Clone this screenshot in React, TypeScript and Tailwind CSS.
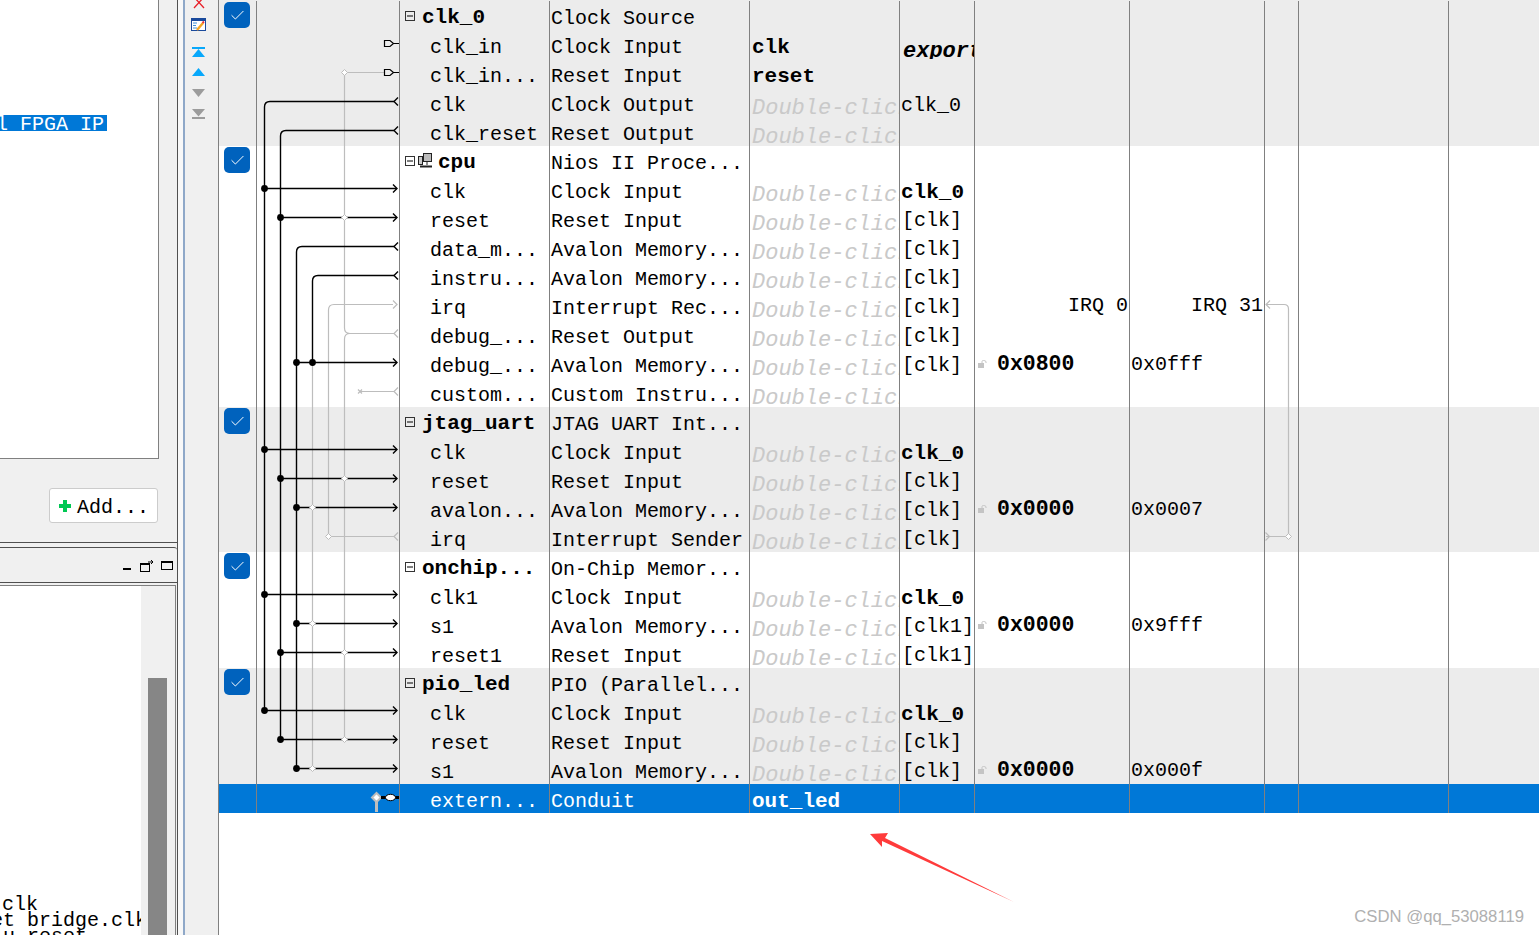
import React from "react";
import { Check } from "lucide-react";

interface Row {
  name: string;
  group?: boolean;
  icon?: boolean;
  type: string;
  conn?: string; // exported name, bold
  dbl?: boolean; // "Double-click" placeholder
  clock?: string;
  clockBold?: boolean;
  exportCol?: boolean;
  base?: string;
  end?: string;
  irq?: boolean;
  selected?: boolean;
}

const groups: { shaded: boolean; rows: Row[] }[] = [
  {
    shaded: true,
    rows: [
      { name: "clk_0", group: true, type: "Clock Source" },
      { name: "clk_in", type: "Clock Input", conn: "clk", exportCol: true },
      { name: "clk_in...", type: "Reset Input", conn: "reset" },
      { name: "clk", type: "Clock Output", dbl: true, clock: "clk_0" },
      { name: "clk_reset", type: "Reset Output", dbl: true },
    ],
  },
  {
    shaded: false,
    rows: [
      { name: "cpu", group: true, icon: true, type: "Nios II Proce..." },
      { name: "clk", type: "Clock Input", dbl: true, clock: "clk_0", clockBold: true },
      { name: "reset", type: "Reset Input", dbl: true, clock: "[clk]" },
      { name: "data_m...", type: "Avalon Memory...", dbl: true, clock: "[clk]" },
      { name: "instru...", type: "Avalon Memory...", dbl: true, clock: "[clk]" },
      { name: "irq", type: "Interrupt Rec...", dbl: true, clock: "[clk]", irq: true },
      { name: "debug_...", type: "Reset Output", dbl: true, clock: "[clk]" },
      { name: "debug_...", type: "Avalon Memory...", dbl: true, clock: "[clk]", base: "0x0800", end: "0x0fff" },
      { name: "custom...", type: "Custom Instru...", dbl: true },
    ],
  },
  {
    shaded: true,
    rows: [
      { name: "jtag_uart", group: true, type: "JTAG UART Int..." },
      { name: "clk", type: "Clock Input", dbl: true, clock: "clk_0", clockBold: true },
      { name: "reset", type: "Reset Input", dbl: true, clock: "[clk]" },
      { name: "avalon...", type: "Avalon Memory...", dbl: true, clock: "[clk]", base: "0x0000", end: "0x0007" },
      { name: "irq", type: "Interrupt Sender", dbl: true, clock: "[clk]" },
    ],
  },
  {
    shaded: false,
    rows: [
      { name: "onchip...", group: true, type: "On-Chip Memor..." },
      { name: "clk1", type: "Clock Input", dbl: true, clock: "clk_0", clockBold: true },
      { name: "s1", type: "Avalon Memory...", dbl: true, clock: "[clk1]", base: "0x0000", end: "0x9fff" },
      { name: "reset1", type: "Reset Input", dbl: true, clock: "[clk1]" },
    ],
  },
  {
    shaded: true,
    rows: [
      { name: "pio_led", group: true, type: "PIO (Parallel..." },
      { name: "clk", type: "Clock Input", dbl: true, clock: "clk_0", clockBold: true },
      { name: "reset", type: "Reset Input", dbl: true, clock: "[clk]" },
      { name: "s1", type: "Avalon Memory...", dbl: true, clock: "[clk]", base: "0x0000", end: "0x000f" },
      { name: "extern...", type: "Conduit", conn: "out_led", selected: true },
    ],
  },
];

const cell = "border-l border-[#808080] overflow-hidden whitespace-nowrap h-[29px]";

const ExpandBox = () => (
  <svg width="10" height="10" viewBox="0 0 10 10" className="shrink-0">
    <rect x="0.5" y="0.5" width="9" height="9" fill="none" stroke="#333" />
    <path d="M2 5H8" stroke="#000" />
  </svg>
);

const CpuIcon = () => (
  <svg width="15" height="15" viewBox="0 0 15 15" className="shrink-0 ml-[3px]">
    <rect x="5.5" y="0.5" width="8" height="8" fill="#bbb" stroke="#222" />
    <rect x="0.5" y="3.5" width="4" height="8" fill="#ccc" stroke="#222" />
    <path d="M2 13.5H14" stroke="#222" strokeWidth="2" />
    <path d="M9 9V12" stroke="#222" />
  </svg>
);

const LockIcon = () => (
  <svg width="9" height="8" viewBox="0 0 9 8" className="shrink-0">
    <rect x="0" y="3" width="6" height="5" fill="#c4c4c4" />
    <path d="M4 3V1.5Q4 0.5 5.5 0.5T8 1.5V3" fill="none" stroke="#c4c4c4" />
  </svg>
);

const TableRow = ({ row, shaded, showCheck }: { row: Row; shaded: boolean; showCheck: boolean }) => {
  const bg = row.selected ? "bg-[#0078d7] text-white" : shaded ? "bg-[#ececec] text-black" : "bg-white text-black";
  return (
    <div className={`grid grid-cols-[37px_143px_150px_200px_150px_75px_155px_135px_34px_150px_91px] h-[29px] leading-[35px] ${bg}`}>
      <div className="pl-[5px] pt-[1px] h-[29px]">
        {showCheck && (
          <div className="w-[26px] h-[26px] rounded-[5px] bg-[#0062bd] flex items-center justify-center">
            <Check size={17} color="#ffffff" strokeWidth={1.4} />
          </div>
        )}
      </div>
      <div className={cell} />
      {row.group ? (
        <div className={`${cell} flex items-center pl-[5px] font-bold text-[21px]`}>
          <ExpandBox />
          {row.icon && <CpuIcon />}
          <span className={`pt-[4px] ${row.icon ? "ml-[5px]" : "ml-[7px]"}`}>{row.name}</span>
        </div>
      ) : (
        <div className={`${cell} pl-[30px]`}>{row.name}</div>
      )}
      <div className={`${cell} pl-[1px]`}>{row.type}</div>
      {row.dbl ? (
        <div className={`${cell} pl-[2px] italic text-[22px] leading-[42px] text-[#c9c9c9]`}>Double-click</div>
      ) : (
        <div className={`${cell} pl-[2px] font-bold text-[21px]`}>{row.conn}</div>
      )}
      {row.exportCol ? (
        <div className={`${cell} pl-[3px] italic font-bold text-[22px] leading-[44px]`}>export</div>
      ) : row.clock === "clk_0" ? (
        <div className={`${cell} pl-[1px] ${row.clockBold ? "font-bold text-[21px]" : ""}`}>{row.clock}</div>
      ) : (
        <div className={`${cell} pl-[2px] leading-[33px]`}>{row.clock}</div>
      )}
      {row.irq ? (
        <div className={`${cell} text-right pr-[1px] leading-[29px]`}>IRQ 0</div>
      ) : (
        <div className={`${cell} pl-[3px] flex items-center`}>
          {row.base && (
            <>
              <LockIcon />
              <span className="ml-[10px] pt-[2px] font-bold text-[21.5px]">{row.base}</span>
            </>
          )}
        </div>
      )}
      <div className={`${cell} ${row.irq ? "text-right pr-[1px] leading-[29px]" : "pl-[1px] leading-[31px]"}`}>
        {row.irq ? "IRQ 31" : row.end}
      </div>
      <div className={cell} />
      <div className={cell} />
      <div className={cell} />
    </div>
  );
};

const arrowIn = (x: number, y: number) => `M${x - 4} ${y - 4}L${x} ${y}L${x - 4} ${y + 4}`;
const arrowOut = (x: number, y: number) => `M${x + 4} ${y - 4}L${x} ${y}L${x + 4} ${y + 4}`;

const blackDots: [number, number][] = [
  [264.5, 188.5], [280.5, 217.5], [296.5, 362.5], [312.5, 362.5], [264.5, 449.5], [280.5, 478.5],
  [296.5, 507.5], [264.5, 594.5], [296.5, 623.5], [280.5, 652.5], [264.5, 710.5], [280.5, 739.5], [296.5, 768.5],
];
const hollowDots: [number, number][] = [
  [344.5, 72.5], [344.5, 217.5], [344.5, 478.5], [312.5, 507.5], [328.5, 536.5], [312.5, 623.5],
  [344.5, 652.5], [344.5, 739.5], [312.5, 768.5], [1288.5, 536.5],
];
const inputs = [188.5, 217.5, 362.5, 449.5, 478.5, 507.5, 594.5, 623.5, 652.5, 710.5, 739.5, 768.5];

// the connection wires, the irq bridge on the right and the red annotation arrow
const Wires = () => (
  <svg width="1320" height="935" viewBox="219 0 1320 935" className="absolute inset-0 pointer-events-none">
    <g fill="none" stroke="#bdbdbd" strokeWidth="1.2">
      <path d="M384 72.5H344.5V328Q344.5 333.5 350 333.5H394M350 333.5Q344.5 333.5 344.5 339V739.5" />
      <path d={arrowOut(394, 333.5)} />
      <path d="M312.5 362.5V768.5" />
      <path d="M393 304.5H334Q328.5 304.5 328.5 310V536.5H394" />
      <path d={arrowIn(397, 304.5)} />
      <path d={arrowOut(394, 536.5)} />
      <path d="M360 391.5H394" />
      <path d={arrowOut(394, 391.5)} />
      <path d="M358 389.5L362 393.5M362 389.5L358 393.5" />
      <path d="M1266 304.5H1284Q1288.5 304.5 1288.5 309V536.5H1266" />
      <path d={arrowOut(1266, 304.5)} />
      <path d={arrowIn(1269.5, 536.5)} />
    </g>
    <g fill="none" stroke="#000" strokeWidth="1.4">
      <path d="M394 101.5H270Q264.5 101.5 264.5 107V710.5" />
      <path d="M394 130.5H286Q280.5 130.5 280.5 136V739.5" />
      <path d="M394 246.5H302Q296.5 246.5 296.5 252V768.5" />
      <path d="M394 275.5H318Q312.5 275.5 312.5 281V362.5" />
      <path d={arrowOut(394, 101.5)} />
      <path d={arrowOut(394, 130.5)} />
      <path d={arrowOut(394, 246.5)} />
      <path d={arrowOut(394, 275.5)} />
      {inputs.map((y) => (
        <React.Fragment key={y}>
          <path d={`M${blackDots.find((d) => d[1] === y)?.[0] ?? 264.5} ${y}H396.5`} />
          <path d={arrowIn(397, y)} />
        </React.Fragment>
      ))}
      <path d="M384.5 40.5H390L393.5 43.5L390 46.5H384.5ZM393.5 43.5H399" strokeWidth="1.2" />
      <path d="M384.5 69.5H390L393.5 72.5L390 75.5H384.5ZM393.5 72.5H399" strokeWidth="1.2" />
    </g>
    {blackDots.map(([x, y]) => (
      <circle key={`${x}-${y}`} cx={x} cy={y} r="3.4" fill="#000" />
    ))}
    {hollowDots.map(([x, y]) => (
      <path key={`${x}-${y}`} d={`M${x} ${y - 3}L${x + 3} ${y}L${x} ${y + 3}L${x - 3} ${y}Z`} fill="#fff" stroke="#bdbdbd" />
    ))}
    {/* exported conduit */}
    <path d="M376.5 797.5V812" stroke="#bdbdbd" strokeWidth="3" />
    <path d="M376.5 793L381 797.5L376.5 802L372 797.5Z" fill="#fff" stroke="#bdbdbd" strokeWidth="2" />
    <path d="M381 797.5H399" stroke="#000" strokeWidth="3" />
    <ellipse cx="390.5" cy="797.5" rx="5" ry="3.2" fill="#fff" stroke="#000" />
    <polygon points="870,834 888,833 885,838 1014,902 882,841 882,847" fill="#ff3b3b" />
  </svg>
);

const Toolbar = () => (
  <div className="w-[36px] bg-[#f0f0f0] border-l-[2px] border-r border-l-[#8fa8c8] border-r-[#808080] flex flex-col items-center shrink-0 pr-[6px]">
    <svg width="14" height="9" viewBox="0 0 14 9">
      <path d="M2 -3L12 8M12 -3L2 8" stroke="#e8202a" strokeWidth="1.3" fill="none" />
    </svg>
    <svg width="15" height="14" viewBox="0 0 15 14" className="mt-[9px]">
      <rect x="0.5" y="0.5" width="14" height="12" fill="#fff" stroke="#1a4a9c" />
      <rect x="0" y="0" width="15" height="3" fill="#1a4a9c" />
      <path d="M2 5H6M2 7.5H5M2 10H6" stroke="#3f8fd8" />
      <path d="M6 12L12 5" stroke="#f5a623" strokeWidth="2.4" />
      <path d="M11.5 5L13 3.5" stroke="#e8303a" strokeWidth="2" />
    </svg>
    <svg width="13" height="10" viewBox="0 0 13 10" className="mt-[15px]">
      <path d="M0 0H13V2H0ZM6.5 2L13 10H0Z" fill="#08a8fb" />
    </svg>
    <svg width="13" height="8" viewBox="0 0 13 8" className="mt-[11px]">
      <path d="M6.5 0L13 8H0Z" fill="#08a8fb" />
    </svg>
    <svg width="13" height="8" viewBox="0 0 13 8" className="mt-[13px]">
      <path d="M0 0H13L6.5 8Z" fill="#9c9c9c" />
    </svg>
    <svg width="13" height="10" viewBox="0 0 13 10" className="mt-[12px]">
      <path d="M0 0H13L6.5 7.5ZM0 8H13V10H0Z" fill="#9c9c9c" />
    </svg>
  </div>
);

const LeftPanes = () => (
  <div className="w-[178px] shrink-0 border-r border-[#505050] flex flex-col bg-[#f0f0f0] overflow-hidden">
    <div className="h-[543px] shrink-0 border-b border-[#505050]">
      <div className="w-[159px] h-[459px] bg-white border-r border-b border-[#808080] pt-[115px] overflow-hidden">
        <div className="-ml-[4px] w-fit pr-[3px] h-[16px] leading-[20px] bg-[#0078d7] text-white overflow-hidden">l FPGA IP</div>
      </div>
      <div className="pl-[49px] pt-[29px]">
        <div className="w-[109px] h-[35px] bg-white border border-[#cccccc] rounded-[3px] flex items-center pl-[9px]">
          <svg width="12" height="12" viewBox="0 0 12 12" className="shrink-0">
            <path d="M4 0H8V4H12V8H8V12H4V8H0V4H4Z" fill="#00c853" />
          </svg>
          <span className="ml-[6px] pt-[4px] text-black">Add...</span>
        </div>
      </div>
    </div>
    <div className="mt-[4px] h-[36px] shrink-0 border-t border-b border-[#505050] rounded-tr-[3px] flex items-center justify-end gap-[7px] pr-[4px]">
      <svg width="8" height="3" viewBox="0 0 8 3" className="mt-[8px] mr-[2px]">
        <rect width="8" height="2" fill="#000" />
      </svg>
      <svg width="14" height="13" viewBox="0 0 14 13">
        <rect x="0.5" y="4.5" width="9" height="8" fill="none" stroke="#000" />
        <rect x="0" y="4" width="10" height="2" fill="#000" />
        <path d="M8 3H13M11 1L13 3L11 5" fill="none" stroke="#000" />
      </svg>
      <svg width="12" height="9" viewBox="0 0 12 9">
        <rect x="0.5" y="0.5" width="11" height="8" fill="none" stroke="#000" />
        <rect x="0" y="0" width="12" height="2" fill="#000" />
      </svg>
    </div>
    <div className="flex-1 min-h-0 pt-[2px] pr-[1px]">
      <div className="h-full border-t border-r border-[#808080] flex">
        <div className="w-[141px] bg-white overflow-hidden flex flex-col justify-end leading-[16px] whitespace-nowrap text-black">
          <div className="pl-[2px]">clk</div>
          <div className="-ml-[9px]">et bridge.clk</div>
          <div className="pl-[3px] -mb-[10px]">u reset</div>
        </div>
        <div className="flex-1 pl-[7px] pt-[92px] flex">
          <div className="w-[19px] bg-[#868686]" />
        </div>
      </div>
    </div>
  </div>
);

export default function App() {
  return (
    <div className="relative w-[1539px] h-[935px] overflow-hidden bg-white flex font-['Liberation_Mono',monospace] text-[20px]">
      <LeftPanes />
      <div className="w-[5px] shrink-0 bg-[#f8f8f8]" />
      <Toolbar />
      <div className="relative flex-1 min-w-0">
        <div className="h-[1px] bg-[#ececec]" />
        {groups.map((g) =>
          g.rows.map((row, i) => (
            <TableRow key={`${g.rows[0].name}-${i}`} row={row} shaded={g.shaded} showCheck={i === 0} />
          ))
        )}
        <Wires />
      </div>
      <div className="absolute right-[15px] bottom-[8px] text-[16.7px] leading-[20px] text-[#b0b0b0] font-['Liberation_Sans',sans-serif]">
        CSDN @qq_53088119
      </div>
    </div>
  );
}
